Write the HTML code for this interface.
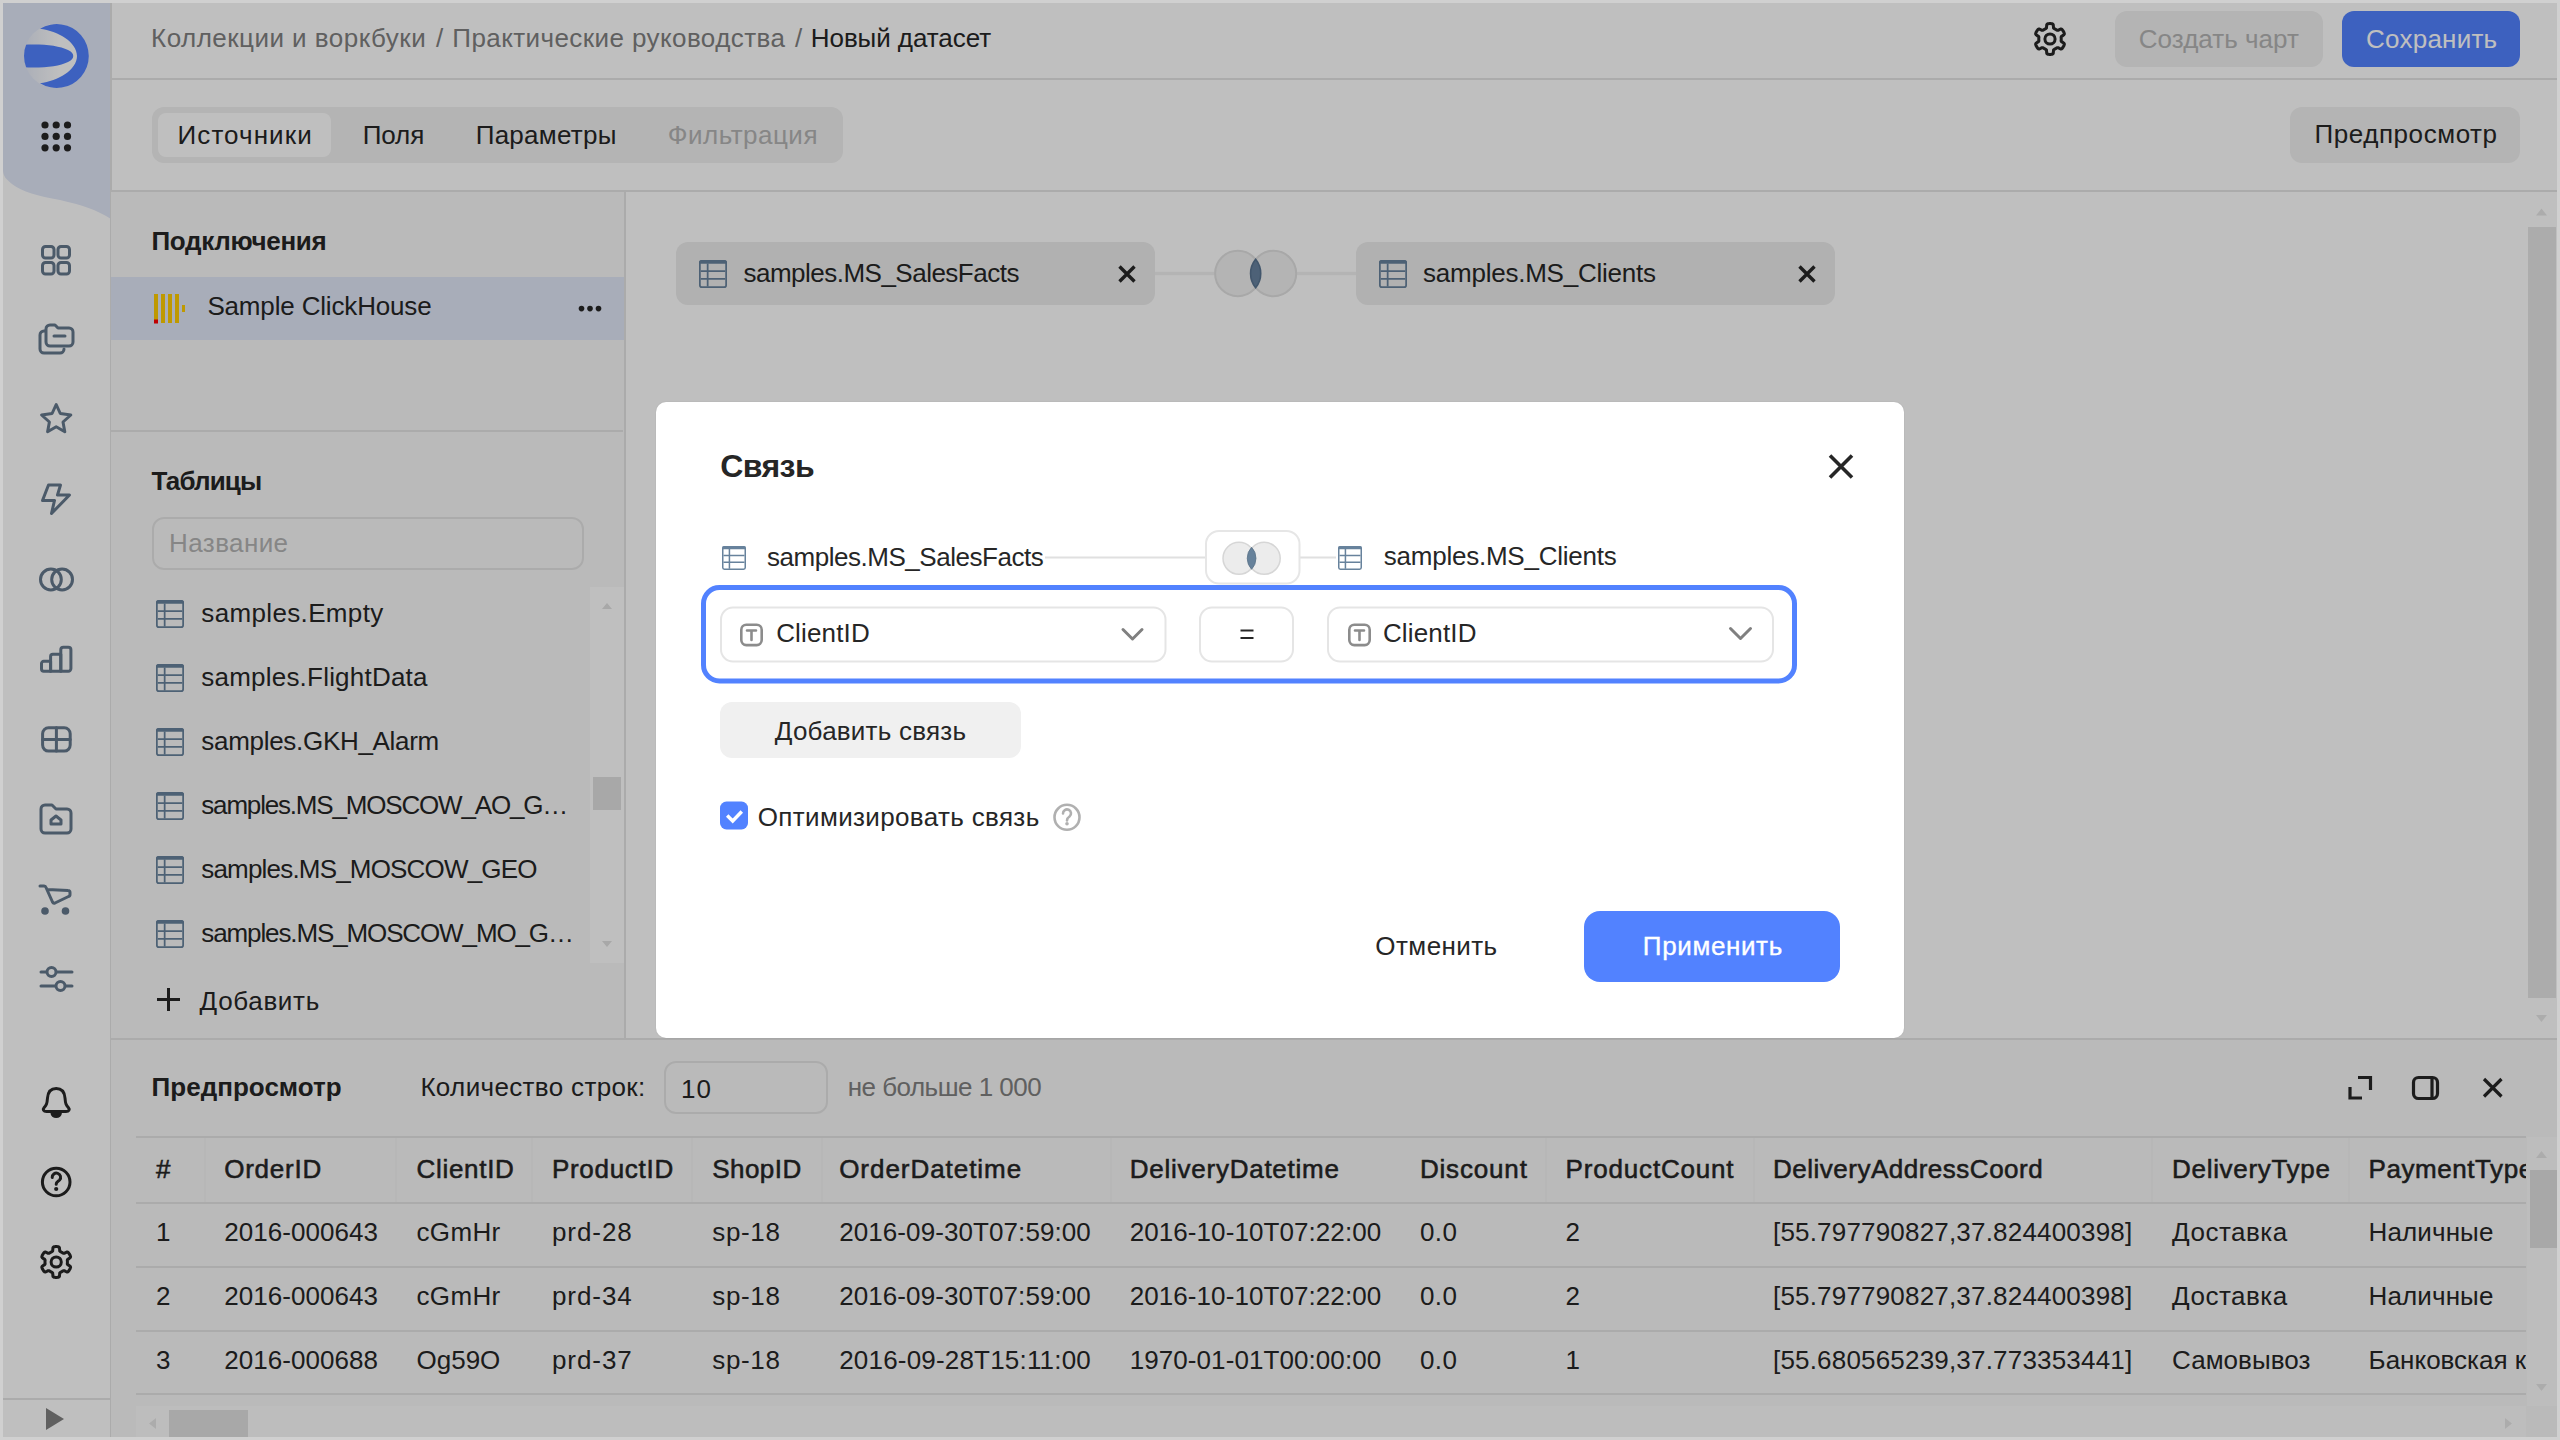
<!DOCTYPE html>
<html><head><meta charset="utf-8"><title>DataLens</title>
<style>
*{box-sizing:border-box;margin:0;padding:0}
html,body{width:2560px;height:1440px;overflow:hidden;background:#d0d0d0}
body{font-family:"Liberation Sans",sans-serif;font-size:26px;color:#262626;position:relative}
.a{position:absolute}
.t{position:absolute;white-space:nowrap;line-height:26px;height:26px}
.page{position:absolute;left:3px;top:3px;width:2554px;height:1434px;background:#fff;overflow:hidden}
.in{position:absolute;left:-3px;top:-3px;width:2560px;height:1440px}
.veil{position:absolute;left:3px;top:3px;width:2554px;height:1434px;background:rgba(0,0,0,0.25)}
svg{position:absolute;overflow:visible}
.hl{position:absolute;height:2px;background:#e5e5e5}
.vl{position:absolute;width:2px;background:#e5e5e5}
.ic{fill:none;stroke:#65788d;stroke-width:3;stroke-linecap:round;stroke-linejoin:round}
.ick{fill:none;stroke:#262626;stroke-width:3;stroke-linecap:round;stroke-linejoin:round}
</style></head><body>
<div class="page"><div class="in">
<svg style="left:0;top:0" width="120" height="240" viewBox="0 0 120 240">
  <defs><linearGradient id="lg" x1="0" y1="0" x2="1" y2="0"><stop offset="0" stop-color="#e4e9f5"/><stop offset="0.55" stop-color="#ffffff"/></linearGradient></defs>
  <path d="M3 3 H111 V219 C97 210 82 205 60 200 C38 196 22 192 12 184 C6 179 3 176 3 170 Z" fill="#e1e7f7"/>
  <circle cx="56" cy="56" r="32" fill="url(#lg)"/>
  <path d="M40,28.75 C58,31 77,42 77,56 C77,70 58,81 40,83.25 A32,32 0 1,0 40,28.75 Z" fill="#5282ff"/>
  <clipPath id="lc"><circle cx="56" cy="56" r="32"/></clipPath><path clip-path="url(#lc)" d="M18,45 C40,43.5 58,45 68,50 C75,53 75,59 68,62 C58,67 40,68.5 18,67 Z" fill="#5282ff"/>
  <g fill="#262626">
    <circle cx="45" cy="125" r="3.6"/><circle cx="56.2" cy="125" r="3.6"/><circle cx="67.5" cy="125" r="3.6"/>
    <circle cx="45" cy="136.4" r="3.6"/><circle cx="56.2" cy="136.4" r="3.6"/><circle cx="67.5" cy="136.4" r="3.6"/>
    <circle cx="45" cy="147.8" r="3.6"/><circle cx="56.2" cy="147.8" r="3.6"/><circle cx="67.5" cy="147.8" r="3.6"/>
  </g>
</svg>
<div class="vl" style="left:110.4px;top:3px;height:1434px;width:1.8px"></div>
<svg style="left:0;top:0" width="120" height="1440" viewBox="0 0 120 1440">
  <g class="ic">
    <rect x="42.5" y="246.5" width="11.5" height="11.5" rx="3"/><rect x="58" y="246.5" width="11.5" height="11.5" rx="3"/>
    <rect x="42.5" y="262.5" width="11.5" height="11.5" rx="3"/><rect x="58" y="262.5" width="11.5" height="11.5" rx="3"/>
    <path d="M45 331 H44 A4 4 0 0 0 40 335 V349 A4 4 0 0 0 44 353 H60 A4 4 0 0 0 64 349"/>
    <path d="M46 329 A4 4 0 0 1 50 325 H55 L58 328 H69 A4 4 0 0 1 73 332 V342 A4 4 0 0 1 69 346 H50 A4 4 0 0 1 46 342 Z"/>
    <path d="M54 336 H65"/>
    <path d="M56.2 404.5 L60.3 413.5 L70.8 415 L63 422 L64.8 431.8 L56.2 426.8 L47.6 431.8 L49.4 422 L41.6 415 L52.1 413.5 Z"/>
    <path d="M48.5 485 H60.5 L57.5 495 H69.5 L51.5 513.5 L54.5 500.5 H42.5 Z"/>
    <circle cx="50.9" cy="579.5" r="10.4"/><circle cx="62.1" cy="579.5" r="10.4"/>
    <path d="M41.5 663.5 A2.2 2.2 0 0 1 43.7 661.3 H50.6 V671.2 H43.7 A2.2 2.2 0 0 1 41.5 669 Z"/><path d="M50.6 656.5 A2.2 2.2 0 0 1 52.8 654.3 H60.8 V671.2 H50.6 Z"/><path d="M60.8 649.8 A2.6 2.6 0 0 1 63.4 647.2 H68.3 A2.6 2.6 0 0 1 70.9 649.8 V668.6 A2.6 2.6 0 0 1 68.3 671.2 H60.8 Z"/>
    <rect x="42.6" y="727.7" width="27.6" height="23.4" rx="6"/><path d="M56.4 727.7 V751.1 M42.6 739.4 H70.2"/>
    <path d="M41 809 A4 4 0 0 1 45 805 H52 L56 809 H67 A4 4 0 0 1 71 813 V829 A4 4 0 0 1 67 833 H45 A4 4 0 0 1 41 829 Z"/>
    <path d="M51 824 V820 L56 816 L61 820 V824 Z"/>
    <path d="M40 886 H44 A2 2 0 0 1 46 887.5 L52.5 902 A2 2 0 0 0 55 903 L68.5 896.5 A2 2 0 0 0 70 894.5 V892.5 A2 2 0 0 0 68 890.5 L47.5 889.5"/>
    <path d="M41 972 H72 M41 986 H72"/>
    <circle cx="51.5" cy="972" r="4.5" fill="#fff"/><circle cx="60.5" cy="986" r="4.5" fill="#fff"/>
  </g>
  <g fill="#65788d"><circle cx="45" cy="911" r="3.8"/><circle cx="65.5" cy="911" r="3.8"/></g>
  <g class="ick">
    <path d="M56.2 1088.5 C50.5 1088.5 48 1092 47.5 1098 C47 1104 46.5 1105 44 1107.8 C42.5 1109.5 43.5 1111.5 46.5 1111.5 H66 C69 1111.5 70 1109.5 68.5 1107.8 C66 1105 65.5 1104 65 1098 C64.5 1092 62 1088.5 56.2 1088.5 Z"/>
    <path d="M52 1113 A4.2 3.6 0 0 0 60.4 1113 Z" fill="#262626"/>
    <circle cx="56.2" cy="1182" r="13.8"/>
    <path d="M52.2 1177.5 A4.2 4.2 0 1 1 59.6 1180 C58.2 1181.4 56.2 1182 56.2 1184.3"/>
    <path d="M56.2 1246.6 L56.9 1246.6 L57.5 1246.7 L58.2 1246.8 L58.9 1247.0 L59.4 1247.5 L59.6 1249.2 L59.7 1250.8 L60.1 1251.4 L60.5 1251.6 L60.9 1251.8 L61.4 1252.1 L61.8 1252.3 L62.2 1252.6 L62.6 1252.8 L63.0 1253.1 L63.5 1253.3 L64.2 1253.3 L65.6 1252.6 L67.1 1252.0 L67.9 1252.2 L68.4 1252.6 L68.8 1253.2 L69.2 1253.7 L69.5 1254.3 L69.9 1254.9 L70.2 1255.5 L70.4 1256.1 L70.6 1256.8 L70.3 1257.5 L69.0 1258.6 L67.7 1259.4 L67.3 1260.0 L67.3 1260.5 L67.4 1261.0 L67.4 1261.5 L67.4 1262.0 L67.4 1262.5 L67.4 1263.0 L67.3 1263.5 L67.3 1264.0 L67.7 1264.6 L69.0 1265.4 L70.3 1266.5 L70.6 1267.2 L70.4 1267.9 L70.2 1268.5 L69.9 1269.1 L69.5 1269.7 L69.2 1270.3 L68.8 1270.8 L68.4 1271.4 L67.9 1271.8 L67.1 1272.0 L65.6 1271.4 L64.2 1270.7 L63.5 1270.7 L63.0 1270.9 L62.6 1271.2 L62.2 1271.4 L61.8 1271.7 L61.4 1271.9 L60.9 1272.2 L60.5 1272.4 L60.1 1272.6 L59.7 1273.2 L59.6 1274.8 L59.4 1276.5 L58.9 1277.0 L58.2 1277.2 L57.5 1277.3 L56.9 1277.4 L56.2 1277.4 L55.5 1277.4 L54.9 1277.3 L54.2 1277.2 L53.5 1277.0 L53.0 1276.5 L52.8 1274.8 L52.7 1273.2 L52.3 1272.6 L51.9 1272.4 L51.5 1272.2 L51.0 1271.9 L50.6 1271.7 L50.2 1271.4 L49.8 1271.2 L49.4 1270.9 L48.9 1270.7 L48.2 1270.7 L46.8 1271.4 L45.3 1272.0 L44.5 1271.8 L44.0 1271.4 L43.6 1270.8 L43.2 1270.3 L42.9 1269.7 L42.5 1269.1 L42.2 1268.5 L42.0 1267.9 L41.8 1267.2 L42.1 1266.5 L43.4 1265.4 L44.7 1264.6 L45.1 1264.0 L45.1 1263.5 L45.0 1263.0 L45.0 1262.5 L45.0 1262.0 L45.0 1261.5 L45.0 1261.0 L45.1 1260.5 L45.1 1260.0 L44.7 1259.4 L43.4 1258.6 L42.1 1257.5 L41.8 1256.8 L42.0 1256.1 L42.2 1255.5 L42.5 1254.9 L42.9 1254.3 L43.2 1253.7 L43.6 1253.2 L44.0 1252.6 L44.5 1252.2 L45.3 1252.0 L46.8 1252.6 L48.2 1253.3 L48.9 1253.3 L49.4 1253.1 L49.8 1252.8 L50.2 1252.6 L50.6 1252.3 L51.0 1252.1 L51.5 1251.8 L51.9 1251.6 L52.3 1251.4 L52.7 1250.8 L52.8 1249.2 L53.0 1247.5 L53.5 1247.0 L54.2 1246.8 L54.9 1246.7 L55.5 1246.6 Z"/>
    <circle cx="56.2" cy="1262" r="5.1"/>
  </g>
  <circle cx="56.2" cy="1189" r="2.1" fill="#262626"/>
  <path d="M46 1408 L64 1419 L46 1430 Z" fill="#808080"/>
</svg>
<div class="hl" style="left:3px;top:1398px;width:108px"></div>
<div class="hl" style="left:111px;top:78px;width:2446px"></div>
<div class="t" style="left:151.09px;top:25.49px;color:#808080;letter-spacing:0.467px">Коллекции и воркбуки</div>
<div class="t" style="left:436.09px;top:25.49px;color:#808080">/</div>
<div class="t" style="left:452.29px;top:25.49px;color:#808080;letter-spacing:0.415px">Практические руководства</div>
<div class="t" style="left:795.09px;top:25.49px;color:#808080">/</div>
<div class="t" style="left:810.79px;top:25.49px;letter-spacing:-0.069px">Новый датасет</div>
<svg style="left:2034px;top:22.5px" width="32" height="32" viewBox="0 0 32 32"><g class="ick">
    <path d="M16.0 0.6 L16.7 0.6 L17.3 0.7 L18.0 0.8 L18.7 1.0 L19.2 1.5 L19.4 3.2 L19.5 4.8 L19.9 5.4 L20.3 5.6 L20.7 5.8 L21.2 6.1 L21.6 6.3 L22.0 6.6 L22.4 6.8 L22.8 7.1 L23.3 7.3 L24.0 7.3 L25.4 6.6 L26.9 6.0 L27.7 6.2 L28.2 6.6 L28.6 7.2 L29.0 7.7 L29.3 8.3 L29.7 8.9 L30.0 9.5 L30.2 10.1 L30.4 10.8 L30.1 11.5 L28.8 12.6 L27.5 13.4 L27.1 14.0 L27.1 14.5 L27.2 15.0 L27.2 15.5 L27.2 16.0 L27.2 16.5 L27.2 17.0 L27.1 17.5 L27.1 18.0 L27.5 18.6 L28.8 19.4 L30.1 20.5 L30.4 21.2 L30.2 21.9 L30.0 22.5 L29.7 23.1 L29.3 23.7 L29.0 24.3 L28.6 24.8 L28.2 25.4 L27.7 25.8 L26.9 26.0 L25.4 25.4 L24.0 24.7 L23.3 24.7 L22.8 24.9 L22.4 25.2 L22.0 25.4 L21.6 25.7 L21.2 25.9 L20.7 26.2 L20.3 26.4 L19.9 26.6 L19.5 27.2 L19.4 28.8 L19.2 30.5 L18.7 31.0 L18.0 31.2 L17.3 31.3 L16.7 31.4 L16.0 31.4 L15.3 31.4 L14.7 31.3 L14.0 31.2 L13.3 31.0 L12.8 30.5 L12.6 28.8 L12.5 27.2 L12.1 26.6 L11.7 26.4 L11.3 26.2 L10.8 25.9 L10.4 25.7 L10.0 25.4 L9.6 25.2 L9.2 24.9 L8.7 24.7 L8.0 24.7 L6.6 25.4 L5.1 26.0 L4.3 25.8 L3.8 25.4 L3.4 24.8 L3.0 24.3 L2.7 23.7 L2.3 23.1 L2.0 22.5 L1.8 21.9 L1.6 21.2 L1.9 20.5 L3.2 19.4 L4.5 18.6 L4.9 18.0 L4.9 17.5 L4.8 17.0 L4.8 16.5 L4.8 16.0 L4.8 15.5 L4.8 15.0 L4.9 14.5 L4.9 14.0 L4.5 13.4 L3.2 12.6 L1.9 11.5 L1.6 10.8 L1.8 10.1 L2.0 9.5 L2.3 8.9 L2.7 8.3 L3.0 7.7 L3.4 7.2 L3.8 6.6 L4.3 6.2 L5.1 6.0 L6.6 6.6 L8.0 7.3 L8.7 7.3 L9.2 7.1 L9.6 6.8 L10.0 6.6 L10.4 6.3 L10.8 6.1 L11.3 5.8 L11.7 5.6 L12.1 5.4 L12.5 4.8 L12.6 3.2 L12.8 1.5 L13.3 1.0 L14.0 0.8 L14.7 0.7 L15.3 0.6 Z"/>
    <circle cx="16" cy="16" r="5.1"/></g></svg>
<div class="a" style="left:2115px;top:11px;width:208px;height:56px;border-radius:12px;background:#f0f0f0"></div>
<div class="t" style="left:2138.79px;top:25.99px;color:#b3b3b3;letter-spacing:0.023px">Создать чарт</div>
<div class="a" style="left:2342px;top:11px;width:178px;height:56px;border-radius:12px;background:#5282ff"></div>
<div class="t" style="left:2366.09px;top:25.99px;color:#fff;letter-spacing:0.225px">Сохранить</div>
<div class="hl" style="left:111px;top:190px;width:2446px"></div>
<div class="a" style="left:152px;top:107px;width:691px;height:56px;border-radius:12px;background:#f0f0f0"></div>
<div class="a" style="left:158px;top:113px;width:173px;height:44px;border-radius:8px;background:#fff"></div>
<div class="t" style="left:177.59px;top:122.19px;letter-spacing:1.071px">Источники</div>
<div class="t" style="left:362.69px;top:122.19px;letter-spacing:-0.076px">Поля</div>
<div class="t" style="left:475.69px;top:122.19px;letter-spacing:0.261px">Параметры</div>
<div class="t" style="left:667.79px;top:122.19px;color:#b3b3b3;letter-spacing:0.487px">Фильтрация</div>
<div class="a" style="left:2290px;top:107px;width:230px;height:56px;border-radius:12px;background:#f0f0f0"></div>
<div class="t" style="left:2314.39px;top:121.19px;letter-spacing:0.578px">Предпросмотр</div>
<div class="a" style="left:111px;top:192px;width:513px;height:847px;background:#f9f9f9"></div><div class="vl" style="left:624px;top:192px;height:847px"></div>
<div class="t" style="left:151.49px;top:228.49px;font-weight:700;letter-spacing:-0.302px">Подключения</div>
<div class="a" style="left:111px;top:277px;width:513px;height:63px;background:#e1e7f7"></div>
<svg style="left:150px;top:290px" width="40" height="40" viewBox="150 290 40 40">
  <g fill="#ffcc00"><rect x="154" y="294" width="4" height="29"/><rect x="161" y="294" width="4" height="29"/><rect x="168" y="294" width="4" height="29"/><rect x="175" y="294" width="4" height="29"/><rect x="182" y="305" width="3" height="7"/></g>
  <rect x="154" y="319.5" width="4" height="4" fill="#ff0000"/></svg>
<div class="t" style="left:207.39px;top:292.79px;letter-spacing:-0.161px">Sample ClickHouse</div>
<svg style="left:570px;top:300px" width="40" height="20" viewBox="570 300 40 20">
  <g fill="#262626"><circle cx="581.5" cy="308.6" r="2.8"/><circle cx="590" cy="308.6" r="2.8"/><circle cx="598.5" cy="308.6" r="2.8"/></g></svg>
<div class="hl" style="left:111px;top:430px;width:512px"></div>
<div class="t" style="left:151.49px;top:467.69px;font-weight:700;letter-spacing:-0.866px">Таблицы</div>
<div class="a" style="left:152px;top:517px;width:432px;height:53px;border-radius:12px;border:2px solid #e5e5e5"></div>
<div class="t" style="left:169.09px;top:529.79px;color:#b3b3b3;letter-spacing:0.402px">Название</div>
<svg style="left:156px;top:600px" width="28" height="28" viewBox="0 0 16 16"><g fill="none" stroke="#67829c" stroke-width="1.0"><rect x="0.5" y="0.5" width="15" height="15" rx="1.1"/><path d="M1 6.3 H15 M1 10.8 H15 M4.95 2 V15.2"/></g><path d="M0 1.6 A1.6 1.6 0 0 1 1.6 0 H14.4 A1.6 1.6 0 0 1 16 1.6 V2.2 H0 Z" fill="#67829c"/></svg>
<div class="t" style="left:201.29px;top:600.19px;letter-spacing:0.355px">samples.Empty</div>
<svg style="left:156px;top:664px" width="28" height="28" viewBox="0 0 16 16"><g fill="none" stroke="#67829c" stroke-width="1.0"><rect x="0.5" y="0.5" width="15" height="15" rx="1.1"/><path d="M1 6.3 H15 M1 10.8 H15 M4.95 2 V15.2"/></g><path d="M0 1.6 A1.6 1.6 0 0 1 1.6 0 H14.4 A1.6 1.6 0 0 1 16 1.6 V2.2 H0 Z" fill="#67829c"/></svg>
<div class="t" style="left:201.29px;top:664.19px;letter-spacing:0.215px">samples.FlightData</div>
<svg style="left:156px;top:728px" width="28" height="28" viewBox="0 0 16 16"><g fill="none" stroke="#67829c" stroke-width="1.0"><rect x="0.5" y="0.5" width="15" height="15" rx="1.1"/><path d="M1 6.3 H15 M1 10.8 H15 M4.95 2 V15.2"/></g><path d="M0 1.6 A1.6 1.6 0 0 1 1.6 0 H14.4 A1.6 1.6 0 0 1 16 1.6 V2.2 H0 Z" fill="#67829c"/></svg>
<div class="t" style="left:201.29px;top:728.19px;letter-spacing:-0.296px">samples.GKH_Alarm</div>
<svg style="left:156px;top:792px" width="28" height="28" viewBox="0 0 16 16"><g fill="none" stroke="#67829c" stroke-width="1.0"><rect x="0.5" y="0.5" width="15" height="15" rx="1.1"/><path d="M1 6.3 H15 M1 10.8 H15 M4.95 2 V15.2"/></g><path d="M0 1.6 A1.6 1.6 0 0 1 1.6 0 H14.4 A1.6 1.6 0 0 1 16 1.6 V2.2 H0 Z" fill="#67829c"/></svg>
<div class="t" style="left:201.29px;top:792.19px;letter-spacing:-1.181px">samples.MS_MOSCOW_AO_G…</div>
<svg style="left:156px;top:856px" width="28" height="28" viewBox="0 0 16 16"><g fill="none" stroke="#67829c" stroke-width="1.0"><rect x="0.5" y="0.5" width="15" height="15" rx="1.1"/><path d="M1 6.3 H15 M1 10.8 H15 M4.95 2 V15.2"/></g><path d="M0 1.6 A1.6 1.6 0 0 1 1.6 0 H14.4 A1.6 1.6 0 0 1 16 1.6 V2.2 H0 Z" fill="#67829c"/></svg>
<div class="t" style="left:201.29px;top:856.19px;letter-spacing:-0.816px">samples.MS_MOSCOW_GEO</div>
<svg style="left:156px;top:920px" width="28" height="28" viewBox="0 0 16 16"><g fill="none" stroke="#67829c" stroke-width="1.0"><rect x="0.5" y="0.5" width="15" height="15" rx="1.1"/><path d="M1 6.3 H15 M1 10.8 H15 M4.95 2 V15.2"/></g><path d="M0 1.6 A1.6 1.6 0 0 1 1.6 0 H14.4 A1.6 1.6 0 0 1 16 1.6 V2.2 H0 Z" fill="#67829c"/></svg>
<div class="t" style="left:201.29px;top:920.19px;letter-spacing:-1.118px">samples.MS_MOSCOW_MO_G…</div>
<div class="a" style="left:590px;top:587px;width:34px;height:376px;background:#ffffff"></div>
<div class="a" style="left:593px;top:777px;width:28px;height:33px;background:#e0e0e0"></div>
<svg style="left:590px;top:590px" width="34" height="370" viewBox="590 590 34 370">
  <path d="M602 609 L607 603 L612 609 Z" fill="#e0e0e0"/><path d="M602 941 L612 941 L607 947 Z" fill="#e0e0e0"/></svg>
<svg style="left:150px;top:985px" width="40" height="30" viewBox="150 985 40 30">
  <path class="ick" d="M168.5 988 V1011 M157 999.5 H180" style="stroke-linecap:butt"/></svg>
<div class="t" style="left:199.59px;top:987.89px;letter-spacing:0.671px">Добавить</div>
<div class="a" style="left:676px;top:242px;width:479px;height:63px;border-radius:12px;background:#ececec"></div>
<svg style="left:699px;top:260px" width="28" height="28" viewBox="0 0 16 16"><g fill="none" stroke="#67829c" stroke-width="1.0"><rect x="0.5" y="0.5" width="15" height="15" rx="1.1"/><path d="M1 6.3 H15 M1 10.8 H15 M4.95 2 V15.2"/></g><path d="M0 1.6 A1.6 1.6 0 0 1 1.6 0 H14.4 A1.6 1.6 0 0 1 16 1.6 V2.2 H0 Z" fill="#67829c"/></svg>
<div class="t" style="left:743.49px;top:259.99px;letter-spacing:-0.510px">samples.MS_SalesFacts</div>
<div class="a" style="left:1356px;top:242px;width:479px;height:63px;border-radius:12px;background:#ececec"></div>
<svg style="left:1378.5px;top:260px" width="28" height="28" viewBox="0 0 16 16"><g fill="none" stroke="#67829c" stroke-width="1.0"><rect x="0.5" y="0.5" width="15" height="15" rx="1.1"/><path d="M1 6.3 H15 M1 10.8 H15 M4.95 2 V15.2"/></g><path d="M0 1.6 A1.6 1.6 0 0 1 1.6 0 H14.4 A1.6 1.6 0 0 1 16 1.6 V2.2 H0 Z" fill="#67829c"/></svg>
<div class="t" style="left:1423.09px;top:259.99px;letter-spacing:-0.240px">samples.MS_Clients</div>
<svg style="left:0;top:0" width="2560" height="400" viewBox="0 0 2560 400">
  <g class="ick" style="stroke-width:3.4;stroke-linecap:butt">
    <path d="M1119.5 266.5 L1134.5 281.5 M1134.5 266.5 L1119.5 281.5"/>
    <path d="M1799.5 266.5 L1814.5 281.5 M1814.5 266.5 L1799.5 281.5"/></g>
  <path d="M1155 273.5 H1214 M1297 273.5 H1356" stroke="#f1f1f1" stroke-width="3.5"/>
  <circle cx="1237.8" cy="273.5" r="22.7" fill="#f0f0f0" stroke="#e0e0e0" stroke-width="2"/>
  <circle cx="1273.5" cy="273.5" r="22.7" fill="#f0f0f0" stroke="#e0e0e0" stroke-width="2"/>
  <path d="M1255.65 259.2 A22.7 22.7 0 0 1 1255.65 287.8 A22.7 22.7 0 0 1 1255.65 259.2 Z" fill="#67829f" stroke="#587390" stroke-width="1.6"/></svg>
<div class="a" style="left:2528px;top:227px;width:28px;height:771px;background:#e6e6e6"></div>
<svg style="left:2520px;top:200px" width="40" height="830" viewBox="2520 200 40 830">
  <path d="M2536 215.5 L2541.5 208.5 L2547 215.5 Z" fill="#e6e6e6"/><path d="M2536 1015 L2547 1015 L2541.5 1022 Z" fill="#e6e6e6"/></svg>
<div class="a" style="left:111px;top:1040px;width:2446px;height:397px;background:#f9f9f9"></div>
<div class="hl" style="left:111px;top:1038px;width:2446px"></div>
<div class="t" style="left:151.59px;top:1073.99px;font-weight:700;letter-spacing:0.022px">Предпросмотр</div>
<div class="t" style="left:420.39px;top:1073.99px;letter-spacing:0.351px">Количество строк:</div>
<div class="a" style="left:664px;top:1061px;width:164px;height:53px;border-radius:12px;border:2px solid #e5e5e5"></div>
<div class="t" style="left:681.09px;top:1075.99px;letter-spacing:1.078px">10</div>
<div class="t" style="left:847.69px;top:1073.99px;color:#808080;letter-spacing:-0.511px">не больше 1 000</div>
<svg style="left:2330px;top:1060px" width="200" height="60" viewBox="2330 1060 200 60">
  <g class="ick" style="stroke-linecap:butt;stroke-linejoin:miter;stroke-width:3.2">
    <path d="M2350 1087 V1098 H2362 M2358 1077.5 H2370.5 V1090"/>
    <rect x="2413.5" y="1077.5" width="24" height="21" rx="5"/><path d="M2432 1078 V1098"/>
    <path d="M2484 1079 L2501.5 1096.5 M2501.5 1079 L2484 1096.5"/></g></svg>
<div class="hl" style="left:136px;top:1135.5px;width:2390px"></div>
<div class="hl" style="left:136px;top:1201.5px;width:2390px"></div>
<div class="hl" style="left:136px;top:1265.5px;width:2390px"></div>
<div class="hl" style="left:136px;top:1329.5px;width:2390px"></div>
<div class="hl" style="left:136px;top:1393px;width:2390px"></div>
<div class="a" style="left:0;top:0;width:2526px;height:1440px;overflow:hidden"><div class="a" style="left:203.5px;top:1137.5px;width:2px;height:64px;background:#f5f5f5"></div>
<div class="a" style="left:395px;top:1137.5px;width:2px;height:64px;background:#f5f5f5"></div>
<div class="a" style="left:530.5px;top:1137.5px;width:2px;height:64px;background:#f5f5f5"></div>
<div class="a" style="left:691px;top:1137.5px;width:2px;height:64px;background:#f5f5f5"></div>
<div class="a" style="left:820.5px;top:1137.5px;width:2px;height:64px;background:#f5f5f5"></div>
<div class="a" style="left:1109.5px;top:1137.5px;width:2px;height:64px;background:#f5f5f5"></div>
<div class="a" style="left:1544.5px;top:1137.5px;width:2px;height:64px;background:#f5f5f5"></div>
<div class="a" style="left:1752.5px;top:1137.5px;width:2px;height:64px;background:#f5f5f5"></div>
<div class="a" style="left:2151px;top:1137.5px;width:2px;height:64px;background:#f5f5f5"></div>
<div class="a" style="left:2347.5px;top:1137.5px;width:2px;height:64px;background:#f5f5f5"></div>
<div class="t" style="left:156.09px;top:1155.99px;-webkit-text-stroke:0.55px #262626">#</div>
<div class="t" style="left:224.19px;top:1155.99px;letter-spacing:0.755px;-webkit-text-stroke:0.55px #262626">OrderID</div>
<div class="t" style="left:416.49px;top:1155.99px;letter-spacing:0.702px;-webkit-text-stroke:0.55px #262626">ClientID</div>
<div class="t" style="left:551.89px;top:1155.99px;letter-spacing:0.711px;-webkit-text-stroke:0.55px #262626">ProductID</div>
<div class="t" style="left:712.29px;top:1155.99px;letter-spacing:0.433px;-webkit-text-stroke:0.55px #262626">ShopID</div>
<div class="t" style="left:839.19px;top:1155.99px;letter-spacing:0.958px;-webkit-text-stroke:0.55px #262626">OrderDatetime</div>
<div class="t" style="left:1129.69px;top:1155.99px;letter-spacing:0.756px;-webkit-text-stroke:0.55px #262626">DeliveryDatetime</div>
<div class="t" style="left:1419.89px;top:1155.99px;letter-spacing:0.835px;-webkit-text-stroke:0.55px #262626">Discount</div>
<div class="t" style="left:1565.59px;top:1155.99px;letter-spacing:0.820px;-webkit-text-stroke:0.55px #262626">ProductCount</div>
<div class="t" style="left:1772.99px;top:1155.99px;letter-spacing:0.505px;-webkit-text-stroke:0.55px #262626">DeliveryAddressCoord</div>
<div class="t" style="left:2172.09px;top:1155.99px;letter-spacing:0.684px;-webkit-text-stroke:0.55px #262626">DeliveryType</div>
<div class="t" style="left:2368.59px;top:1155.99px;letter-spacing:0.562px;-webkit-text-stroke:0.55px #262626">PaymentType</div>
<div class="t" style="left:156.09px;top:1219.49px">1</div>
<div class="t" style="left:224.19px;top:1219.49px;letter-spacing:0.053px">2016-000643</div>
<div class="t" style="left:416.49px;top:1219.49px;letter-spacing:0.368px">cGmHr</div>
<div class="t" style="left:551.89px;top:1219.49px;letter-spacing:0.949px">prd-28</div>
<div class="t" style="left:712.29px;top:1219.49px;letter-spacing:0.638px">sp-18</div>
<div class="t" style="left:839.19px;top:1219.49px;letter-spacing:0.084px">2016-09-30T07:59:00</div>
<div class="t" style="left:1129.69px;top:1219.49px;letter-spacing:0.078px">2016-10-10T07:22:00</div>
<div class="t" style="left:1419.89px;top:1219.49px;letter-spacing:0.522px">0.0</div>
<div class="t" style="left:1565.59px;top:1219.49px">2</div>
<div class="t" style="left:1772.99px;top:1219.49px;letter-spacing:0.190px">[55.797790827,37.824400398]</div>
<div class="t" style="left:2172.09px;top:1219.49px;letter-spacing:0.492px">Доставка</div>
<div class="t" style="left:2368.59px;top:1219.49px;letter-spacing:0.117px">Наличные</div>
<div class="t" style="left:156.09px;top:1283.49px">2</div>
<div class="t" style="left:224.19px;top:1283.49px;letter-spacing:0.053px">2016-000643</div>
<div class="t" style="left:416.49px;top:1283.49px;letter-spacing:0.368px">cGmHr</div>
<div class="t" style="left:551.89px;top:1283.49px;letter-spacing:0.949px">prd-34</div>
<div class="t" style="left:712.29px;top:1283.49px;letter-spacing:0.638px">sp-18</div>
<div class="t" style="left:839.19px;top:1283.49px;letter-spacing:0.084px">2016-09-30T07:59:00</div>
<div class="t" style="left:1129.69px;top:1283.49px;letter-spacing:0.078px">2016-10-10T07:22:00</div>
<div class="t" style="left:1419.89px;top:1283.49px;letter-spacing:0.522px">0.0</div>
<div class="t" style="left:1565.59px;top:1283.49px">2</div>
<div class="t" style="left:1772.99px;top:1283.49px;letter-spacing:0.190px">[55.797790827,37.824400398]</div>
<div class="t" style="left:2172.09px;top:1283.49px;letter-spacing:0.492px">Доставка</div>
<div class="t" style="left:2368.59px;top:1283.49px;letter-spacing:0.117px">Наличные</div>
<div class="t" style="left:156.09px;top:1347.49px">3</div>
<div class="t" style="left:224.19px;top:1347.49px;letter-spacing:0.053px">2016-000688</div>
<div class="t" style="left:416.49px;top:1347.49px">Og59O</div>
<div class="t" style="left:551.89px;top:1347.49px;letter-spacing:0.949px">prd-37</div>
<div class="t" style="left:712.29px;top:1347.49px;letter-spacing:0.638px">sp-18</div>
<div class="t" style="left:839.19px;top:1347.49px;letter-spacing:0.191px">2016-09-28T15:11:00</div>
<div class="t" style="left:1129.69px;top:1347.49px;letter-spacing:0.078px">1970-01-01T00:00:00</div>
<div class="t" style="left:1419.89px;top:1347.49px;letter-spacing:0.522px">0.0</div>
<div class="t" style="left:1565.59px;top:1347.49px">1</div>
<div class="t" style="left:1772.99px;top:1347.49px;letter-spacing:0.190px">[55.680565239,37.773353441]</div>
<div class="t" style="left:2172.09px;top:1347.49px;letter-spacing:0.039px">Самовывоз</div>
<div class="t" style="left:2368.59px;top:1347.49px">Банковская карта</div></div>
<div class="a" style="left:2527px;top:1137px;width:30px;height:269px;background:#fdfdfd"></div>
<div class="a" style="left:2530px;top:1170px;width:27px;height:78px;background:#e0e0e0"></div>
<svg style="left:2520px;top:1140px" width="40" height="260" viewBox="2520 1140 40 260">
  <path d="M2536 1158 L2541.5 1151 L2547 1158 Z" fill="#e6e6e6"/><path d="M2536 1384 L2547 1384 L2541.5 1391 Z" fill="#e6e6e6"/></svg>
<div class="a" style="left:136px;top:1406px;width:2390px;height:31px;background:#fdfdfd"></div>
<div class="a" style="left:169px;top:1409.5px;width:79px;height:28px;background:#e0e0e0"></div>
<svg style="left:140px;top:1406px" width="2400" height="32" viewBox="140 1406 2400 32">
  <path d="M156 1418 L149 1423.5 L156 1429 Z" fill="#e6e6e6"/><path d="M2505 1418 L2512 1423.5 L2505 1429 Z" fill="#e6e6e6"/></svg>
</div></div>
<div class="veil"></div>
<div class="a" style="left:656px;top:402px;width:1248px;height:636px;background:#fff;border-radius:10px;box-shadow:0 0 1.5px rgba(0,0,0,0.12)"></div>
<div class="t" style="left:720.13px;top:450.41px;font-size:32px;line-height:32px;height:32px;font-weight:700;letter-spacing:-0.540px">Связь</div>
<svg style="left:1820px;top:445px" width="44" height="44" viewBox="1820 445 44 44">
  <path class="ick" style="stroke-width:3.6;stroke-linecap:butt" d="M1830 455.5 L1852 477.5 M1852 455.5 L1830 477.5"/></svg>
<svg style="left:722px;top:546px" width="24" height="24" viewBox="0 0 16 16"><g fill="none" stroke="#67829c" stroke-width="1.0"><rect x="0.5" y="0.5" width="15" height="15" rx="1.1"/><path d="M1 6.3 H15 M1 10.8 H15 M4.95 2 V15.2"/></g><path d="M0 1.6 A1.6 1.6 0 0 1 1.6 0 H14.4 A1.6 1.6 0 0 1 16 1.6 V2.2 H0 Z" fill="#67829c"/></svg>
<div class="t" style="left:767.09px;top:544.24px;letter-spacing:-0.475px">samples.MS_SalesFacts</div>
<svg style="left:1338px;top:546px" width="24" height="24" viewBox="0 0 16 16"><g fill="none" stroke="#67829c" stroke-width="1.0"><rect x="0.5" y="0.5" width="15" height="15" rx="1.1"/><path d="M1 6.3 H15 M1 10.8 H15 M4.95 2 V15.2"/></g><path d="M0 1.6 A1.6 1.6 0 0 1 1.6 0 H14.4 A1.6 1.6 0 0 1 16 1.6 V2.2 H0 Z" fill="#67829c"/></svg>
<div class="t" style="left:1383.79px;top:543.49px;letter-spacing:-0.240px">samples.MS_Clients</div>
<svg style="left:0;top:0" width="2560" height="1440" viewBox="0 0 2560 1440">
  <path d="M1045 557.6 H1205 M1300 557.6 H1336" stroke="#e0e0e0" stroke-width="2"/>
  <rect x="1206" y="531" width="93.5" height="52.5" rx="13" fill="#fff" stroke="#e6e6e6" stroke-width="2"/>
  <circle cx="1239" cy="558.3" r="16" fill="#ececec" stroke="#d6d6d6" stroke-width="1.5"/>
  <circle cx="1264.2" cy="558.3" r="16" fill="#ececec" stroke="#d6d6d6" stroke-width="1.5"/>
  <path d="M1251.6 547.3 A16 16 0 0 1 1251.6 569.3 A16 16 0 0 1 1251.6 547.3 Z" fill="#67829b" stroke="#5a7288" stroke-width="0.8"/>
  <rect x="703.5" y="587.5" width="1091" height="93.5" rx="16" fill="none" stroke="#5282ff" stroke-width="5"/>
  <rect x="721" y="607.5" width="444.5" height="54" rx="12" fill="#fff" stroke="#e5e5e5" stroke-width="2"/>
  <rect x="1200" y="607.5" width="93" height="54" rx="12" fill="#fff" stroke="#e5e5e5" stroke-width="2"/>
  <rect x="1328" y="607.5" width="445" height="54" rx="12" fill="#fff" stroke="#e5e5e5" stroke-width="2"/>
  <g fill="none" stroke="#8c8c8c" stroke-width="2.6">
    <rect x="741.3" y="624.7" width="20.4" height="20.4" rx="5"/><rect x="1349.3" y="624.7" width="20.4" height="20.4" rx="5"/></g>
  <g fill="none" stroke="#8c8c8c" stroke-width="2.6" stroke-linecap="round">
    <path d="M747 630.5 H756 M751.5 630.5 V640"/><path d="M1355 630.5 H1364 M1359.5 630.5 V640"/></g>
  <g fill="none" stroke="#808080" stroke-width="3" stroke-linecap="round" stroke-linejoin="round">
    <path d="M1123 629.5 L1132.5 639 L1142 629.5"/><path d="M1730.5 628.5 L1740.5 638.5 L1750.5 628.5"/></g>
  <path d="M1240.5 630.5 H1253.5 M1240.5 638 H1253.5" stroke="#262626" stroke-width="2"/>
  <rect x="720" y="801.5" width="28" height="28" rx="6.5" fill="#5282ff"/>
  <path d="M727.2 815.5 L732.7 821 L741.8 811.5" fill="none" stroke="#fff" stroke-width="3.4"/>
  <circle cx="1067" cy="817.3" r="12.5" fill="none" stroke="#b0b0b0" stroke-width="2.6"/>
  <path d="M1063 813.5 A4 4 0 1 1 1069.5 816.5 C1068 817.5 1067 818.5 1067 820.5" fill="none" stroke="#b0b0b0" stroke-width="2.6" stroke-linecap="round"/>
  <circle cx="1067" cy="823.8" r="1.8" fill="#b0b0b0"/>
</svg>
<div class="t" style="left:776.19px;top:619.99px;letter-spacing:0.159px">ClientID</div>
<div class="t" style="left:1382.89px;top:619.99px;letter-spacing:0.159px">ClientID</div>
<div class="a" style="left:720px;top:702px;width:301px;height:56px;border-radius:12px;background:#f0f0f0"></div>
<div class="t" style="left:774.79px;top:717.59px;letter-spacing:0.231px">Добавить связь</div>
<div class="t" style="left:757.79px;top:804.49px;letter-spacing:0.355px">Оптимизировать связь</div>
<div class="t" style="left:1375.34px;top:932.99px;letter-spacing:0.434px">Отменить</div>
<div class="a" style="left:1584px;top:910.5px;width:256px;height:71.5px;border-radius:16px;background:#5282ff"></div>
<div class="t" style="left:1642.84px;top:932.99px;color:#fff;letter-spacing:0.626px;-webkit-text-stroke:0.35px #fff">Применить</div>
</body></html>
